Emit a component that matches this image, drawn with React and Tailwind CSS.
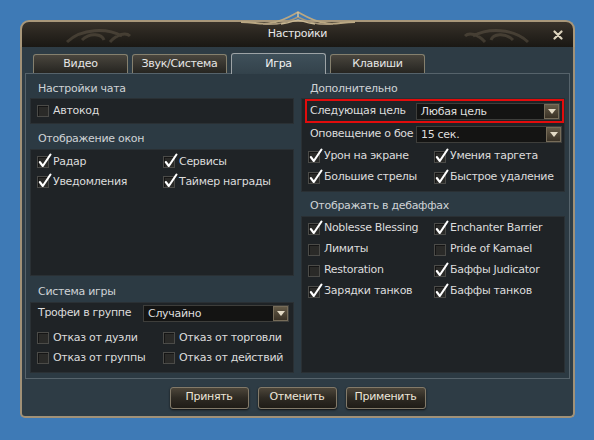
import React from "react";

function Check({ on }) {
  return (
    <span className="relative block h-[12px] w-[12px] shrink-0 border border-[#4b4b48] bg-[#2a2a28] shadow-[inset_1px_1px_0_#151515]">
      {on && (
        <svg className="absolute left-[0px] top-[-4px] h-[15px] w-[14px]" viewBox="0 0 14 15">
          <path d="M1.8 9 L4.8 13 L12.5 1.5" stroke="#ffffff" strokeWidth="2.1" fill="none" strokeLinecap="round" strokeLinejoin="round" />
        </svg>
      )}
    </span>
  );
}

function Item({ on, label }) {
  return (
    <div className="flex items-center gap-[4px]">
      <Check on={on} />
      <span className="whitespace-nowrap">{label}</span>
    </div>
  );
}

function Drop({ value, w }) {
  return (
    <div className={`flex h-[17px] items-center border border-[#3e3e3b] bg-[#141413] ${w}`}>
      <span className="flex-1 pl-[4px] leading-none text-[#dedede]">{value}</span>
      <span className="flex h-[15px] w-[15px] items-center justify-center border border-[#766c59] bg-gradient-to-b from-[#645a47] to-[#3a3226]">
        <svg width="8" height="5" viewBox="0 0 8 5">
          <path d="M0 0H8L4 5Z" fill="#e4dbc6" />
        </svg>
      </span>
    </div>
  );
}

function Tab({ children, active }) {
  if (active)
    return (
      <div className="relative z-10 -mb-[1px] flex h-[21px] w-[95px] items-center justify-center rounded-t-[3px] border border-b-0 border-[#9da3a6] bg-gradient-to-b from-[#3f505a] to-[#33424b] text-[#f2f2f2]">
        {children}
      </div>
    );
  return (
    <div className="flex h-[19px] w-[95px] items-center justify-center rounded-t-[3px] border border-b-0 border-[#85806e] bg-gradient-to-b from-[#4a463e] to-[#262521] text-[#e6e6e6]">
      {children}
    </div>
  );
}

function Btn({ children, w }) {
  return (
    <div className={`flex h-[22px] items-center justify-center rounded-[3px] border border-[#837a69] bg-gradient-to-b from-[#4d463a] via-[#2e2a23] to-[#1f1c17] text-[#ece6d8] shadow-[0_1px_2px_#111] ${w}`}>
      {children}
    </div>
  );
}

function Header({ children, cls }) {
  return <div className={`flex items-center text-[#cfd3d6] ${cls}`}>{children}</div>;
}

export default function App() {
  return (
    <div className="h-[440px] w-[594px] overflow-hidden bg-[#3e7ab6] pl-[20px] pt-[20px] font-['DejaVu_Sans',sans-serif] text-[11px] tracking-[-0.3px] text-[#dcdcdc]">
      <div className="relative h-[398px] w-[555px]">
        {/* title bar */}
        <div className="relative flex h-[27px] items-center justify-center rounded-t-[9px] border-2 border-b-0 border-[#a8977a] bg-gradient-to-b from-[#38322a] via-[#28241e] to-[#1a1814] text-[#e8e8e8]">
          <svg className="absolute left-[40px] top-[2px] h-[22px] w-[70px] opacity-30" viewBox="0 0 70 22">
            <path d="M5 18 C20 4 45 4 60 12 M20 16 C28 8 40 10 42 16 M48 18 C55 10 64 8 68 12" stroke="#8a7c66" strokeWidth="3" fill="none" />
          </svg>
          <svg className="absolute right-[40px] top-[2px] h-[22px] w-[70px] opacity-30" viewBox="0 0 70 22">
            <path d="M65 18 C50 4 25 4 10 12 M50 16 C42 8 30 10 28 16 M22 18 C15 10 6 8 2 12" stroke="#8a7c66" strokeWidth="3" fill="none" />
          </svg>
          <span>Настройки</span>
          <svg className="absolute right-[10px] top-[8px] h-[10px] w-[10px]" viewBox="0 0 10 10">
            <path d="M1.5 1.5 L8.5 8.5 M8.5 1.5 L1.5 8.5" stroke="#ddd4bd" strokeWidth="2.2" strokeLinecap="round" />
          </svg>
        </div>
        {/* crest */}
        <svg className="absolute left-[221px] top-[-9px] h-[20px] w-[114px]" viewBox="0 0 114 20">
          <path d="M0 11 C14 11 20 14 30 12 C42 10 48 6 57 1 C66 6 72 10 84 12 C94 14 100 11 114 11" stroke="#b9a783" strokeWidth="1.8" fill="none" />
          <path d="M22 13 C34 14 46 12 57 6 C68 12 80 14 92 13" stroke="#a8977a" strokeWidth="1.5" fill="none" />
          <path d="M40 13 C48 12 53 10 57 9 C61 10 66 12 74 13" stroke="#c9b893" strokeWidth="1.3" fill="none" />
          <path d="M57 1 L57 6" stroke="#d8c9a4" strokeWidth="1.4" />
        </svg>
        {/* body */}
        <div className="h-[371px] rounded-b-[5px] border-x-2 border-b-2 border-[#a19177] bg-[#2e3c45]">
          <div className="flex h-[26px] items-end gap-[4px] pl-[11px]">
            <Tab>Видео</Tab>
            <Tab>Звук/Система</Tab>
            <Tab active>Игра</Tab>
            <Tab>Клавиши</Tab>
          </div>
          <div className="ml-[3px] flex h-[306px] w-[545px] gap-[7px] border border-[#56636b] bg-[#2c3a43] px-[4px]">
            {/* left column */}
            <div className="flex w-[265px] flex-col">
              <Header cls="h-[24px] pl-[8px] pt-[6px]">Настройки чата</Header>
              <div className="h-[26px] border border-[#2a3034] bg-[#1f2326] pl-[6px] pt-[2px]">
                <div className="flex h-[20px] items-center">
                  <Item label="Автокод" />
                </div>
              </div>
              <Header cls="h-[25px] pl-[8px] pt-[6px]">Отображение окон</Header>
              <div className="h-[127px] border border-[#2a3034] bg-[#1f2326] pl-[6px] pt-[2px]">
                <div className="grid grid-cols-[126px_1fr] auto-rows-[20px] items-center">
                  <Item on label="Радар" />
                  <Item on label="Сервисы" />
                  <Item on label="Уведомления" />
                  <Item on label="Таймер награды" />
                </div>
              </div>
              <Header cls="h-[26px] pl-[8px] pt-[6px]">Система игры</Header>
              <div className="h-[71px] border border-[#2a3034] bg-[#1f2326] pl-[6px] pt-[2px]">
                <div className="flex h-[17px] items-center">
                  <span className="w-[106px] pl-[1px]">Трофеи в группе</span>
                  <Drop value="Случайно" w="w-[146px]" />
                </div>
                <div className="mt-[6px] grid grid-cols-[126px_1fr] auto-rows-[20px] items-center">
                  <Item label="Отказ от дуэли" />
                  <Item label="Отказ от торговли" />
                  <Item label="Отказ от группы" />
                  <Item label="Отказ от действий" />
                </div>
              </div>
            </div>
            {/* right column */}
            <div className="flex w-[264px] flex-col">
              <Header cls="h-[24px] pl-[9px] pt-[6px]">Дополнительно</Header>
              <div className="h-[94px] border border-[#2a3034] bg-[#1f2326]">
                <div className="ml-[3px] flex h-[24px] items-center border-2 border-[#e20c0c] pl-[3px] pr-[2px]">
                  <span className="w-[107px]">Следующая цель</span>
                  <Drop value="Любая цель" w="w-[146px]" />
                </div>
                <div className="flex h-[22px] items-center pl-[8px]">
                  <span className="w-[106px]">Оповещение о бое</span>
                  <Drop value="15 сек." w="w-[146px]" />
                </div>
                <div className="mt-[1px] grid grid-cols-[126px_1fr] auto-rows-[21px] items-center pl-[6px]">
                  <Item on label="Урон на экране" />
                  <Item on label="Умения таргета" />
                  <Item on label="Большие стрелы" />
                  <Item on label="Быстрое удаление" />
                </div>
              </div>
              <Header cls="h-[24px] pl-[9px] pt-[5px]">Отображать в дебаффах</Header>
              <div className="h-[157px] border border-[#2a3034] bg-[#1f2326] pl-[6px] pt-[1px]">
                <div className="grid grid-cols-[126px_1fr] auto-rows-[21px] items-center">
                  <Item on label="Noblesse Blessing" />
                  <Item on label="Enchanter Barrier" />
                  <Item label="Лимиты" />
                  <Item label="Pride of Kamael" />
                  <Item label="Restoration" />
                  <Item on label="Баффы Judicator" />
                  <Item on label="Зарядки танков" />
                  <Item on label="Баффы танков" />
                </div>
              </div>
            </div>
          </div>
          <div className="flex h-[37px] items-center justify-center gap-[9px]">
            <Btn w="w-[79px]">Принять</Btn>
            <Btn w="w-[79px]">Отменить</Btn>
            <Btn w="w-[80px]">Применить</Btn>
          </div>
        </div>
      </div>
    </div>
  );
}
